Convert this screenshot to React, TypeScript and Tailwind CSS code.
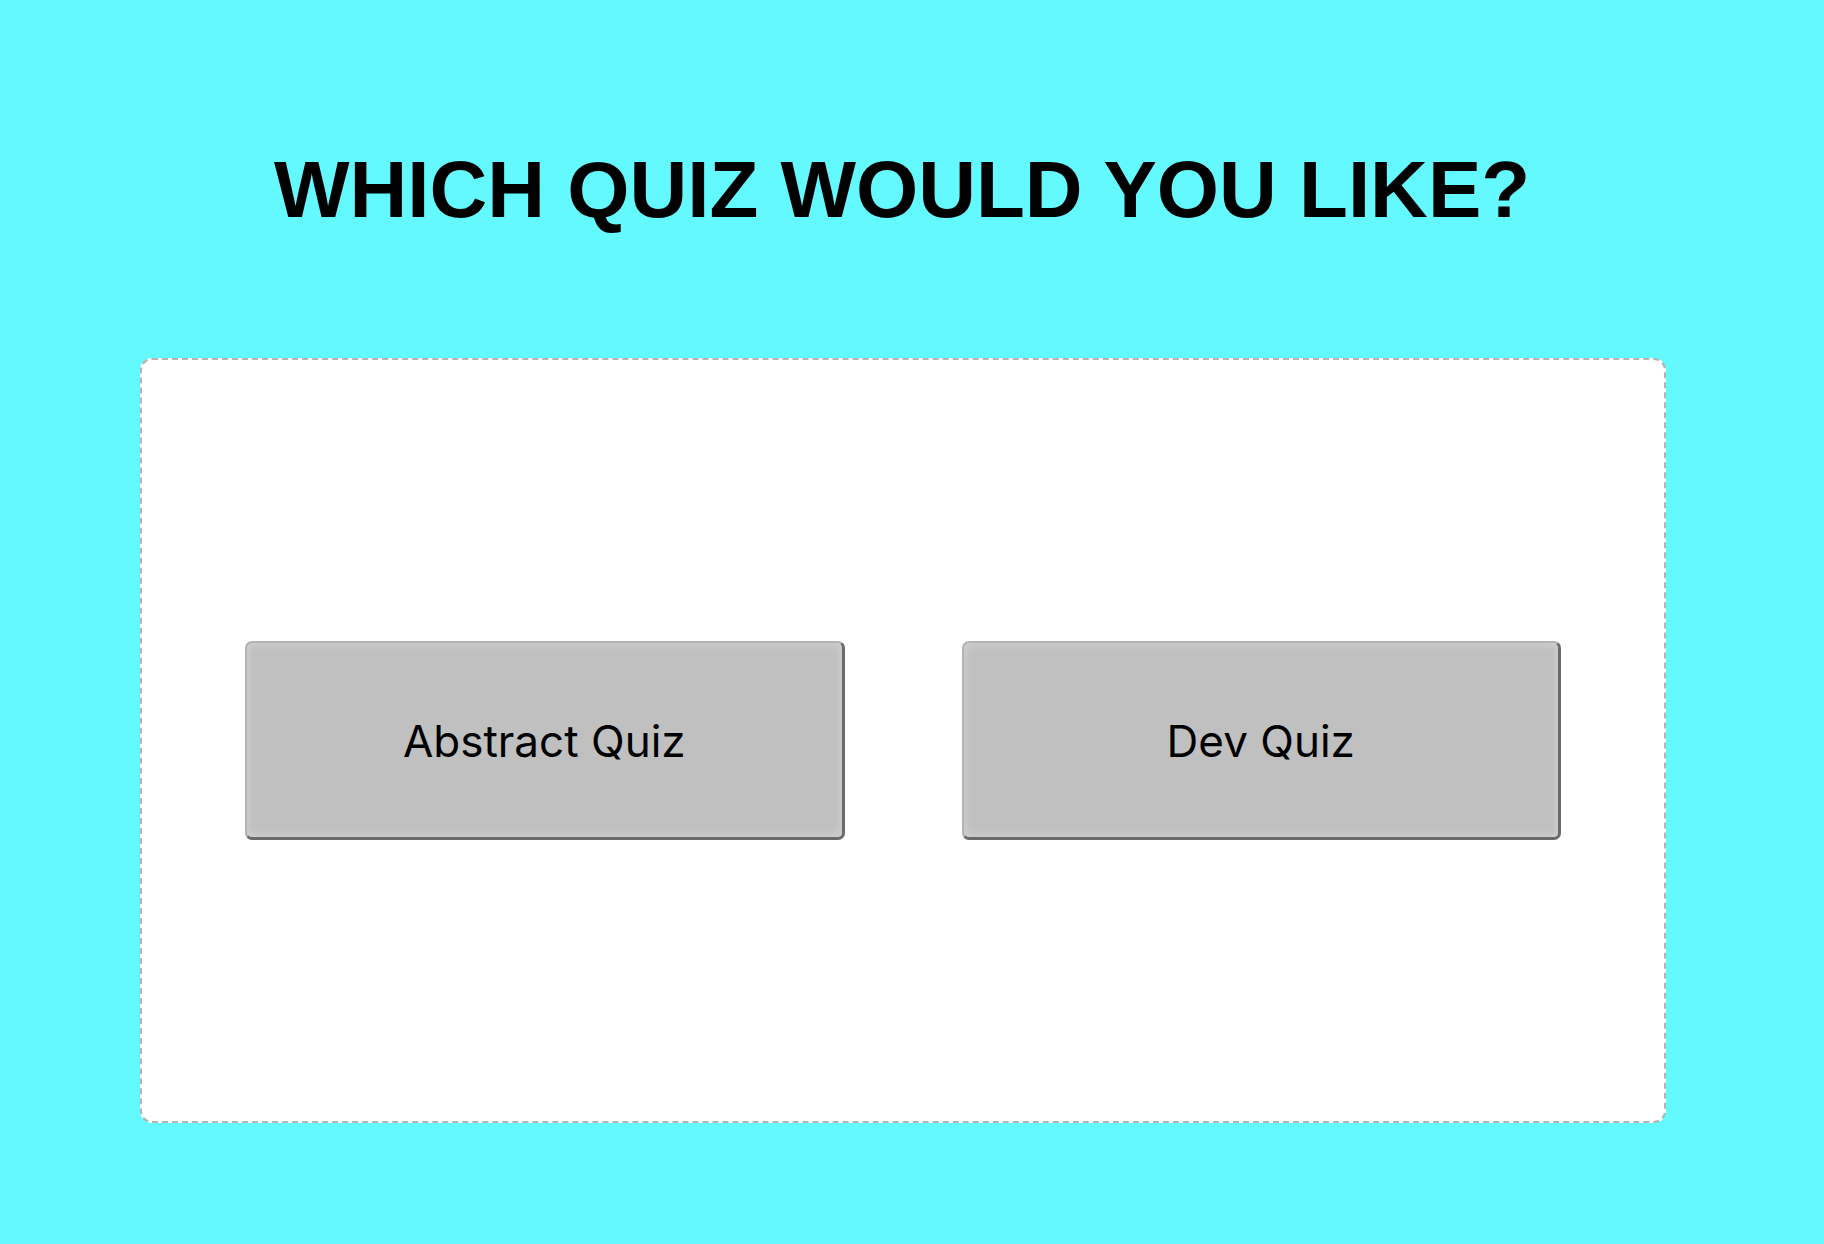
const quizzes = ["Abstract Quiz", "Dev Quiz"]

export default function App() {
  return (
    <div className="min-h-[1244px] w-full bg-[#63f9ff] pt-[144px] pb-[121px]">
      <h1 className="pr-[20px] text-center font-['Liberation_Sans',Arial,sans-serif] text-[80px] font-bold leading-[92px] text-black">
        WHICH QUIZ WOULD YOU LIKE?
      </h1>

      <div className="ml-[140px] mt-[122px] flex h-[765px] w-[1526px] items-center gap-[117px] rounded-[12px] border-2 border-dashed border-[#b4b4b4] bg-white px-[103px]">
        {quizzes.map((name) => (
          <button
            key={name}
            className="flex h-[199px] w-[600px] items-center justify-center rounded-[7px] border-t-2 border-l-2 border-r-[3px] border-b-[3px] border-t-[#b3b3b3] border-l-[#b3b3b3] border-r-[#6a6a6a] border-b-[#6a6a6a] bg-[#c0c0c0] pt-[2px] font-['Inter','Liberation_Sans',sans-serif] text-[44px] text-black shadow-[inset_0_0_10px_rgba(255,255,255,0.35)]"
          >
            {name}
          </button>
        ))}
      </div>
    </div>
  )
}
